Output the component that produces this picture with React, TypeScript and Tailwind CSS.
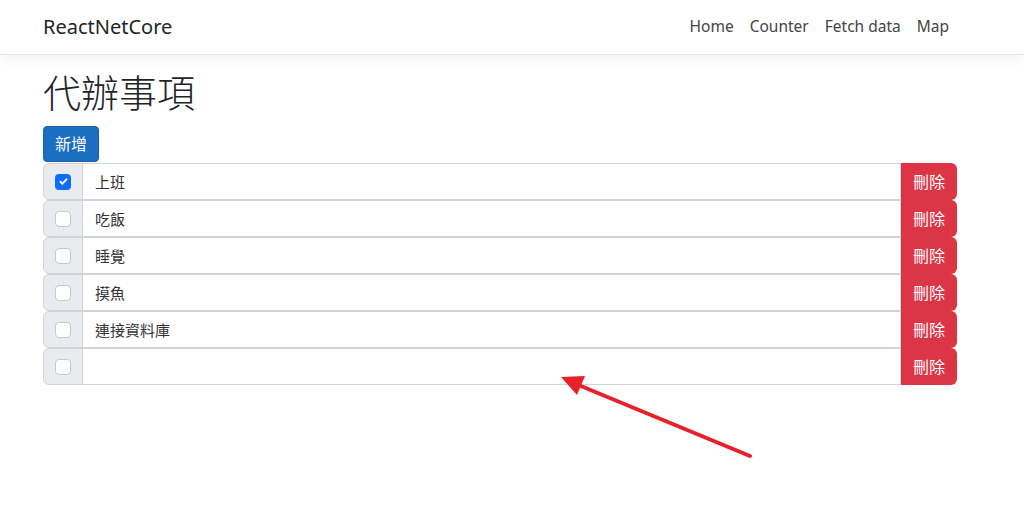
import React from 'react';

const todos = [
  { text: '上班', done: true },
  { text: '吃飯', done: false },
  { text: '睡覺', done: false },
  { text: '摸魚', done: false },
  { text: '連接資料庫', done: false },
  { text: '', done: false },
];

const font = { fontFamily: '"Noto Sans", "Noto Sans CJK TC", sans-serif' };

const App: React.FC = () => {
  return (
    <div className="relative min-h-[526px] bg-white text-[#212529]" style={font}>
      {/* Navbar */}
      <nav className="h-[55px] border-b border-[#e5e5e5] bg-white shadow-[0_4px_12px_rgba(0,0,0,0.05)]">
        <div className="ml-[43px] flex h-full w-[914px] items-center justify-between">
          <span className="text-[20px] text-[#212529]">ReactNetCore</span>
          <ul className="flex text-[15.5px] text-[#444]">
            <li className="px-2">Home</li>
            <li className="px-2">Counter</li>
            <li className="px-2">Fetch data</li>
            <li className="px-2">Map</li>
          </ul>
        </div>
      </nav>

      {/* Todo list */}
      <main className="ml-[43px] w-[914px] pt-[13px]">
        <h1 className="mb-[10px] h-[48px] text-[38px] font-light leading-[48px]">代辦事項</h1>
        <button className="h-[36px] w-[56px] rounded-[4px] border border-[#1861ac] bg-[#1b6ec2] text-[16px] text-white">
          新增
        </button>
        <div className="mt-px flex flex-col">
          {todos.map((t, i) => (
            <div key={i} className="flex h-[37px]">
              <div className="flex w-[40px] items-center justify-center rounded-l-[6px] border border-[#ced4da] bg-[#e9ecef]">
                {t.done ? (
                  <span className="flex h-[16px] w-[16px] items-center justify-center rounded-[4px] bg-[#0d6efd]">
                    <svg width="11" height="11" viewBox="0 0 20 20">
                      <path d="M4.5 10.5l3.5 3.5 7.5-8" fill="none" stroke="#fff" strokeWidth="3.5" strokeLinecap="round" strokeLinejoin="round" />
                    </svg>
                  </span>
                ) : (
                  <span className="h-[16px] w-[16px] rounded-[4px] border border-[#c6c9cc] bg-white" />
                )}
              </div>
              <div className="-ml-px flex flex-1 items-center border border-[#ced4da] bg-white px-3 pt-px text-[15px] text-[#333]">
                {t.text}
              </div>
              <button className="w-[56px] rounded-r-[6px] bg-[#dc3545] text-[16px] text-white">刪除</button>
            </div>
          ))}
        </div>
      </main>

      {/* Annotation arrow */}
      <svg className="pointer-events-none absolute left-0 top-0" width="1024" height="526">
        <line x1="750" y1="456" x2="576" y2="384" stroke="#e8202a" strokeWidth="4" strokeLinecap="round" />
        <polygon points="561,377 585,376 577,395" fill="#e8202a" />
      </svg>
    </div>
  );
};

export default App;
